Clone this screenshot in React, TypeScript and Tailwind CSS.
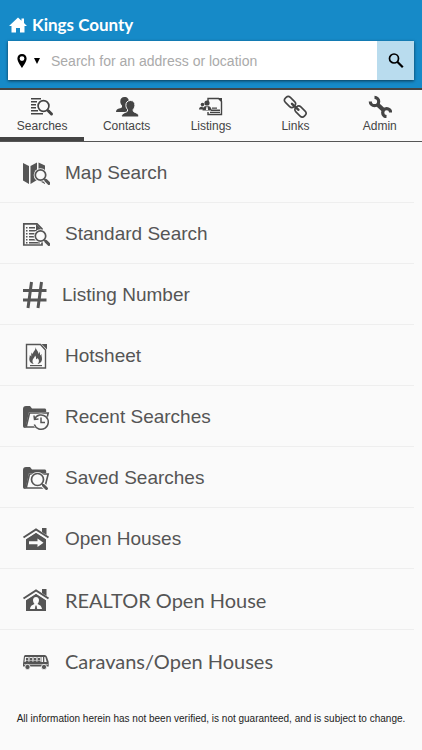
import type { ReactNode } from "react";

const arial = "font-['Liberation_Sans',Arial,sans-serif]";
const humanist = "font-['Lato',Calibri,sans-serif]";

function Magnifier({ cx, cy, r, halo = "#fafafa" }: { cx: number; cy: number; r: number; halo?: string }) {
  const d = r * 0.75;
  return (
    <g fill="none">
      <circle cx={cx} cy={cy} r={r + 1.6} fill={halo} />
      <path d={`M${cx + d} ${cy + d}L${cx + d + 4} ${cy + d + 4}`} stroke={halo} strokeWidth="5" />
      <circle cx={cx} cy={cy} r={r} stroke="currentColor" strokeWidth="1.7" />
      <path d={`M${cx + d} ${cy + d}l2 2`} stroke="currentColor" strokeWidth="1.6" />
      <path d={`M${cx + d + 1.5} ${cy + d + 1.5}l3 3`} stroke="currentColor" strokeWidth="3" strokeLinecap="round" />
    </g>
  );
}

function Icon({ children }: { children: ReactNode }) {
  return (
    <svg viewBox="0 0 28 28" className="size-7 shrink-0" fill="currentColor" aria-hidden="true">
      {children}
    </svg>
  );
}

function TabIcon({ children }: { children: ReactNode }) {
  return (
    <svg viewBox="0 0 24 24" className="size-6 shrink-0" fill="currentColor" aria-hidden="true">
      {children}
    </svg>
  );
}

const tabs = [
  {
    label: "Searches",
    icon: (
      <TabIcon>
        <path d="M1 4h10v1.500H1zM1 7h6v1.500H1zM1 10h5v1.500H1zM1 13h5v1.500H1zM1 16h7v1.500H1zM1 19h12v1.500H1z" />
        <g fill="none" stroke="currentColor">
          <circle cx="13.500" cy="12" r="5.400" strokeWidth="1.700" />
          <path d="M17 15.500l2 2" strokeWidth="1.800" />
          <path d="M18.500 17l3 3" strokeWidth="3" strokeLinecap="round" />
        </g>
      </TabIcon>
    ),
  },
  {
    label: "Contacts",
    icon: (
      <TabIcon>
        <path d="M9.500 3c3 0 4.600 2 4.300 5-.2 2-.9 3-1.400 4v2l3 2v2H1c0-2 1-2.700 3-3.400 2-.7 3-1 3-1.600v-1.500C6 10.500 5.300 9.300 5.300 7.500 5.300 4.500 6.800 3 9.500 3z" />
        <path stroke="#fafafa" strokeWidth="1" d="M15.500 6.500c3 0 4.600 2 4.400 5-.2 2-.9 3.200-1.700 4V17c0 .8 1.500 1.200 3 1.900 1.800.8 2.600 1.700 2.600 4.100H6.500c0-2.400.8-3.300 2.700-4.100 1.500-.7 3.300-1.100 3.300-1.900v-1.500c-.8-.8-1.500-2-1.600-4-.2-3 1.500-5 4.600-5z" />
      </TabIcon>
    ),
  },
  {
    label: "Listings",
    icon: (
      <TabIcon>
        <path d="M9 8V4.500h10.500l3 3V20.500H9V18" fill="none" stroke="currentColor" strokeWidth="1.400" />
        <path d="M19 4h4v4zM13 13.500h5v1.300h-5zM12 15.600h9v1.300h-9zM11 17.700h10V19H11z" />
        <circle cx="3.500" cy="10.500" r="1.800" />
        <circle cx="8" cy="9" r="2.600" />
        <path d="M0 15.500c0-2.300 1.500-3 3.500-3l1 3zM3.500 16.500c0-3.200 1.500-4.500 4.500-4.500s4.500 1.300 4.500 4.500z" />
        <path d="M7.500 12.500h1l.6 3.500H6.900z" fill="#fafafa" />
      </TabIcon>
    ),
  },
  {
    label: "Links",
    icon: (
      <TabIcon>
        <g fill="none" stroke="currentColor" strokeWidth="1.600">
          <rect x="1" y="4.500" width="12" height="7" rx="3" transform="rotate(45 7 8)" />
          <rect x="11.500" y="14" width="12" height="7" rx="3" transform="rotate(45 17.500 17.500)" />
          <path d="M9 9.800l6.500 6" strokeWidth="2.400" strokeLinecap="round" />
        </g>
      </TabIcon>
    ),
  },
  {
    label: "Admin",
    icon: (
      <TabIcon>
        <g fill="none" stroke="currentColor" strokeWidth="3.200">
          <path d="M2.300 7.500A4.200 4.200 0 1 0 6.500 3.300" />
          <path d="M9.500 10.500l6.500 6" strokeWidth="4.400" />
          <path d="M22.700 18.500A4 4 0 1 0 18.500 22.700" />
        </g>
      </TabIcon>
    ),
  },
];

const folder = (
  <>
    <path d="M1 6c0-2 1-3 3-3h4l2 2.500h12.500c1 0 1.700.7 1.700 1.700V9H7L3.500 25H3c-1.300 0-2-.7-2-2z" />
    <path d="M7.500 10h18.700l-3.500 14H4.200z" fill="#fafafa" stroke="currentColor" strokeWidth="1.600" />
  </>
);

const house = (
  <>
    <path d="M4 14.200l10-6.400 10 6.400V25H4z" />
    <path d="M1.500 13L14 5l12.500 8" fill="none" stroke="#fafafa" strokeWidth="4" />
    <path d="M1.500 12.500L14 4.500l12.500 8" fill="none" stroke="currentColor" strokeWidth="2" />
    <path d="M20 3h4.500v7L20 7z" />
  </>
);

const rows = [
  {
    label: "Map Search",
    icon: (
      <Icon>
        <path d="M1 4l6 3v18l-6-3.500zM8.500 7L15 3.500V21l-6.500 4zM16.500 3.500L23 6.500V25l-6.500-3.500z" />
        <Magnifier cx={18.5} cy={16} r={5.2} />
      </Icon>
    ),
  },
  {
    label: "Standard Search",
    icon: (
      <Icon>
        <path d="M1.800 3.800H15l5 5V25H1.800z" fill="none" stroke="currentColor" strokeWidth="1.700" />
        <path d="M14 4v6h6z" />
        <path d="M4 7h1.500v1.400H4zM7 7h6v1.400H7zM4 10h1.500v1.400H4zM7 10h8v1.400H7zM4 13h1.500v1.400H4zM7 13h9v1.400H7zM4 16h1.500v1.400H4zM7 16h7v1.400H7zM4 19h1.500v1.400H4zM7 19h8v1.400H7zM4 22h1.500v1.400H4zM7 22h11v1.400H7z" />
        <Magnifier cx={18.5} cy={16} r={5.2} />
      </Icon>
    ),
  },
  {
    label: "Listing Number",
    gap: "gap-3",
    icon: (
      <Icon>
        <path d="M9.500 1L6 27M19.500 1L16 27M1 9.500h23.500M1 19h23.500" fill="none" stroke="currentColor" strokeWidth="3" />
      </Icon>
    ),
  },
  {
    label: "Hotsheet",
    icon: (
      <Icon>
        <path d="M4.500 2.500h14l5 5.500v18h-19z" fill="none" stroke="currentColor" strokeWidth="1.400" />
        <path d="M19.500 2H25v5.500z" />
        <path d="M13.500 5c.5 3 3 4 3 7l1.300-2.500c0 2 .4 2.500.2 4l1.700-1.500c-.7 2 .6 3 .3 5.500-.3 2.500-2 4-4.500 4.500 2-2 2-4 0-6-.2 1.300-1 1.500-1.500.5.300-1.500-.5-2.500-1-3 .2 2-2.500 3-2.500 5.300 0 1.500.5 2.500 1.200 3.200-2.500-.5-4.200-2-4.400-4.500-.1-2 .7-3 .5-4.500l1.500 1.500c0-2-.3-2.500.5-4l1 1.800c.2-3 3.200-4 2.700-7.300z" />
        <path d="M8 23h12v1.200H8z" />
      </Icon>
    ),
  },
  {
    label: "Recent Searches",
    icon: (
      <Icon>
        {folder}
        <circle cx="19" cy="19" r="8.400" fill="#fafafa" />
        <path d="M12.600 16a7.200 7.200 0 1 1-.3 5.500M12 12.500l.5 4 4-.5M19 14.500V19.500h4" fill="none" stroke="currentColor" strokeWidth="1.500" />
      </Icon>
    ),
  },
  {
    label: "Saved Searches",
    icon: (
      <Icon>
        {folder}
        <Magnifier cx={15.5} cy={15.5} r={6} />
      </Icon>
    ),
  },
  {
    label: "Open Houses",
    icon: (
      <Icon>
        {house}
        <path d="M7 16.200h8.500v-2.700l6 4.300-6 4.200v-2.800H7z" fill="#fafafa" />
      </Icon>
    ),
  },
  {
    label: "REALTOR Open House",
    font: `${humanist} text-xl`,
    icon: (
      <Icon>
        {house}
        <path d="M14 11c2 0 3 1.400 3 3.200S15.800 17.500 15.500 18c1 .8 4 1 4.500 5H8c.5-4 3.500-4.200 4.500-5-.3-.5-1.500-2-1.500-3.800s1-3.200 3-3.200z" fill="#fafafa" />
        <path d="M13.500 19.500h1l.7 3.500h-2.400z" />
      </Icon>
    ),
  },
  {
    label: "Caravans/Open Houses",
    font: `${humanist} text-xl`,
    icon: (
      <Icon>
        <path d="M3 8h19.500c1.500 0 2.200 1 2.700 2.500l1.500 4.500v4.500H1V17l1-8z" />
        <path d="M3 10h18v5H2.500zM22.300 10h1l1.400 5h-2.400zM2 17.200h24v.6H2z" fill="#fafafa" />
        <g>
          <circle cx="5" cy="12" r="1.200" />
          <circle cx="9" cy="12" r="1.200" />
          <circle cx="13" cy="12" r="1.200" />
          <circle cx="17" cy="12" r="1.200" />
          <path d="M3 15.200l2-2.200 2 2.200 2-2.200 2 2.200 2-2.200 2 2.200 2-2.200 2 2.200zM6.700 10h.7v5h-.7zM10.700 10h.7v5h-.7zM14.700 10h.7v5h-.7zM18.700 10h.7v5h-.7z" />
        </g>
        <g stroke="#fafafa" strokeWidth=".8">
          <circle cx="5.500" cy="20" r="2.600" />
          <circle cx="22" cy="20" r="2.600" />
        </g>
      </Icon>
    ),
  },
];

export default function App() {
  return (
    <div className={`min-h-screen bg-[#fafafa] text-[#444] ${arial}`}>
      <header className="border-b-2 border-[#444] bg-[#168ac8] px-2 pt-[13px] pb-2">
        <h1 className={`flex items-center gap-1 text-[17px] leading-6 font-bold text-white ${humanist}`}>
          <svg viewBox="0 0 20 20" className="size-5" fill="currentColor" aria-hidden="true">
            <path d="M10 2.500l3.500 3.300V3.500h2.500v4.600l3 2.900h-2.500v6.500h-4.500V13H8v4.500H3.500V11H1z" />
          </svg>
          Kings County
        </h1>
        <form className="mt-1 flex h-[39px] bg-white shadow-[0_1px_3px_rgba(0,0,0,0.6)]" onSubmit={(e) => e.preventDefault()}>
          <button type="button" aria-label="Search type" className="flex w-10 items-center gap-1.5 pl-2 text-black">
            <svg viewBox="0 0 12 16" className="h-4 w-3" fill="currentColor" aria-hidden="true">
              <path fillRule="evenodd" d="M6 1c2.800 0 4.600 2 4.600 4.600C10.600 9 6 15 6 15S1.400 9 1.400 5.600C1.400 3 3.200 1 6 1zm0 2.200a2.400 2.400 0 1 0 0 4.800 2.400 2.400 0 0 0 0-4.800z" />
            </svg>
            <svg viewBox="0 0 6 6" className="size-1.5" fill="currentColor" aria-hidden="true">
              <path d="M0 0h6L3 6z" />
            </svg>
          </button>
          <input
            type="text"
            aria-label="Search for an address or location"
            placeholder="Search for an address or location"
            className="min-w-0 flex-1 px-[3px] text-sm text-black outline-none placeholder:text-[#aaa]"
          />
          <button type="submit" aria-label="Search" className="flex w-[37px] items-center justify-center bg-[#b9dcee] text-black">
            <svg viewBox="0 0 18 18" className="size-[18px]" fill="none" stroke="currentColor" aria-hidden="true">
              <circle cx="7" cy="6.500" r="4.500" strokeWidth="1.700" />
              <path d="M10.300 9.800l5.500 5.500" strokeWidth="2.200" />
            </svg>
          </button>
        </form>
      </header>

      <nav className="grid grid-cols-5 border-b border-[#555]">
        {tabs.map((tab, i) => (
          <button
            key={tab.label}
            type="button"
            className={`flex h-[51px] flex-col items-center border-b-4 pt-1 text-xs leading-4 ${i === 0 ? "border-[#444]" : "border-transparent"}`}
          >
            {tab.icon}
            {tab.label}
          </button>
        ))}
      </nav>

      <ul className="pr-2 text-[#555]">
        {rows.map((row) => (
          <li key={row.label} className="border-b border-[#eee] last:border-transparent">
            <a href="#" className={`flex h-[60px] items-center pt-0.5 pl-[22px] ${row.gap ?? "gap-[15px]"} ${row.font ?? "text-[19px]"}`}>
              {row.icon}
              {row.label}
            </a>
          </li>
        ))}
      </ul>

      <footer className="px-2 pt-5 pb-6 text-center text-[10px] leading-4 text-[#222]">
        All information herein has not been verified, is not guaranteed, and is subject to change.
      </footer>
    </div>
  );
}
